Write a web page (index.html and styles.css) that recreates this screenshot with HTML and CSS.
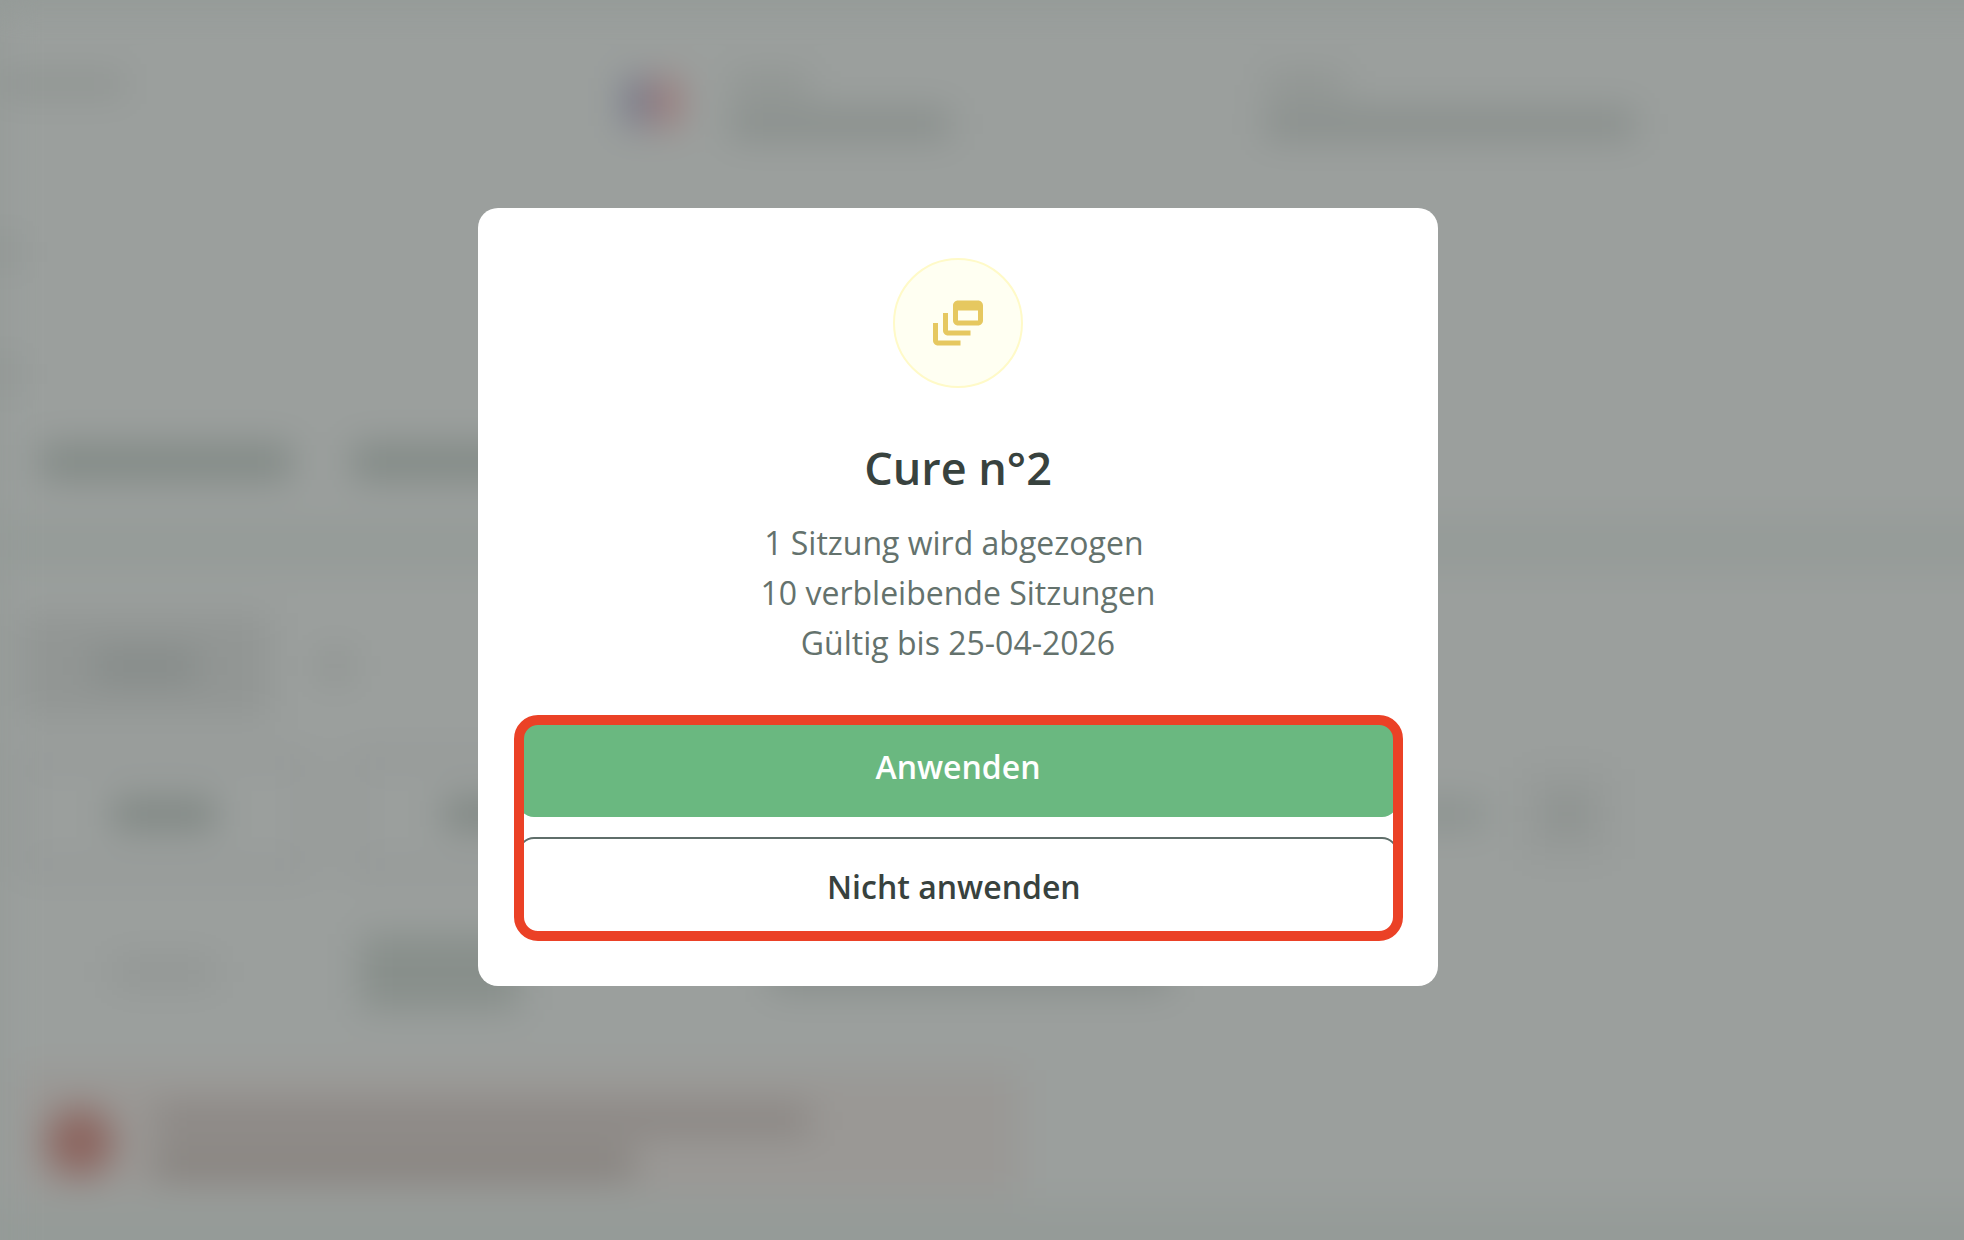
FILE: index.html
```
<!DOCTYPE html>
<html lang="de">
<head>
    <meta charset="UTF-8">
    <meta name="viewport" content="width=device-width, initial-scale=1.0">
    <title>Cure n°2</title>
    <link rel="stylesheet" href="styles.css">
</head>
<body>
    <!-- Blurred page behind the dialog -->
    <div class="page" aria-hidden="true">
        <section class="panel customer">
            <div class="info-grid">
                <div class="info">
                    <span class="bar label long"></span>
                </div>
                <div class="info with-flag">
                    <span class="flag"></span>
                    <div class="lines">
                        <span class="bar label"></span>
                        <span class="bar value"></span>
                    </div>
                </div>
                <div class="info with-icon">
                    <div class="lines">
                        <span class="bar label"></span>
                        <span class="bar value wide"></span>
                    </div>
                </div>
            </div>
            <div class="notes">
                <span class="bar stub"></span>
                <span class="bar stub"></span>
            </div>
            <div class="tabs">
                <span class="bar tab"></span>
                <span class="bar tab"></span>
            </div>
        </section>

        <section class="panel booking">
            <div class="filters">
                <span class="pill"><span class="bar word"></span></span>
                <span class="bar dot"></span>
            </div>
            <div class="options">
                <span class="option"><span class="bar word dark"></span></span>
                <span class="option"><span class="bar word dark"></span></span>
                <span class="option last"><span class="bar word"></span></span>
                <span class="round"><span class="bar dot"></span></span>
            </div>
            <div class="actions">
                <span class="bar word faint"></span>
                <span class="pill small"></span>
                <span class="bar link"></span>
            </div>
            <div class="alert">
                <span class="alert-icon"></span>
                <div class="lines">
                    <span class="bar line"></span>
                    <span class="bar line short"></span>
                </div>
            </div>
        </section>
    </div>

    <div class="overlay">
        <div class="modal" role="dialog" aria-modal="true" aria-labelledby="modalTitle">
            <div class="modal-icon">
                <svg viewBox="0 0 24 24" aria-hidden="true">
                    <path d="M8 8H6v7c0 1.1.9 2 2 2h9v-2H8V8z"/>
                    <path d="M20 3h-8c-1.1 0-2 .9-2 2v6c0 1.1.9 2 2 2h8c1.1 0 2-.9 2-2V5c0-1.1-.9-2-2-2zm0 8h-8V7h8v4z"/>
                    <path d="M4 12H2v7c0 1.1.9 2 2 2h9v-2H4v-7z"/>
                </svg>
            </div>
            <h1 id="modalTitle">Cure n°2</h1>
            <p>1 Sitzung wird abgezogen&nbsp;<br>10 verbleibende Sitzungen<br>Gültig bis 25-04-2026</p>
            <div class="modal-actions">
                <button type="button" class="btn primary">Anwenden</button>
                <button type="button" class="btn secondary">Nicht anwenden&nbsp;</button>
            </div>
        </div>
    </div>
</body>
</html>
```
FILE: styles.css
```
:root {
    --page-bg: #959b98;
    --panel-bg: #9b9f9d;
    --ink: 56, 72, 66;
    --title-color: #38423e;
    --text-color: #64726d;
    --primary: #6ab880;
    --highlight: #eb4126;
}
* {
    box-sizing: border-box;
}
body {
    margin: 0;
    min-height: 100vh;
    overflow: hidden;
    background-color: var(--page-bg);
    font-family: "Open Sans", "Noto Sans", sans-serif;
}

/* Page behind */
.page {
    position: fixed;
    inset: 0 -60px -60px 0;
    background-color: var(--page-bg);
    filter: blur(18px);
}
.panel {
    background-color: var(--panel-bg);
    padding-right: 60px;
}
.customer {
    height: 520px;
    padding-top: 64px;
    border-top: 14px solid var(--page-bg);
}
.booking {
    margin-top: 50px;
    padding-top: 44px;
    padding-bottom: 8px;
}
.bar {
    display: block;
    height: 28px;
    background-color: rgba(var(--ink), 0.2);
}
.info-grid {
    display: grid;
    grid-template-columns: 626px 531px 1fr;
    height: 160px;
}
.info {
    display: flex;
    align-items: flex-start;
    gap: 52px;
}
.with-icon {
    padding-left: 108px;
}
.lines {
    display: flex;
    flex-direction: column;
    gap: 16px;
}
.bar.label {
    width: 80px;
    height: 20px;
    margin-top: -4px;
    background-color: rgba(var(--ink), 0.14);
}
.bar.label.long {
    width: 125px;
}
.bar.value {
    width: 220px;
}
.bar.value.wide {
    width: 370px;
}
.flag {
    width: 52px;
    height: 48px;
    background: linear-gradient(90deg, #6c6e84 0 40%, #a09a9a 40% 60%, #9c7070 60%);
}
.notes {
    display: flex;
    flex-direction: column;
    gap: 94px;
    height: 206px;
}
.bar.stub {
    width: 14px;
}
.tabs {
    display: flex;
    gap: 60px;
    padding-left: 40px;
}
.bar.tab {
    width: 252px;
    height: 36px;
    background-color: rgba(var(--ink), 0.26);
}
.filters {
    display: flex;
    align-items: center;
    gap: 50px;
    padding-left: 20px;
}
.pill {
    display: flex;
    align-items: center;
    justify-content: center;
    width: 250px;
    height: 104px;
    background-color: rgba(var(--ink), 0.09);
}
.bar.word {
    width: 104px;
    background-color: rgba(var(--ink), 0.15);
}
.bar.word.dark {
    background-color: rgba(var(--ink), 0.32);
}
.bar.word.faint {
    background-color: rgba(var(--ink), 0.09);
}
.bar.dot {
    width: 30px;
    background-color: rgba(var(--ink), 0.14);
}
.options {
    display: flex;
    align-items: center;
    gap: 36px;
    margin-top: 36px;
    padding-left: 16px;
}
.option {
    display: flex;
    align-items: center;
    justify-content: center;
    width: 296px;
    height: 120px;
    border: 10px solid rgba(var(--ink), 0.1);
}
.option.last {
    justify-content: flex-end;
    width: 806px;
    border: 0;
}
.round {
    display: flex;
    align-items: center;
    justify-content: center;
    width: 90px;
    height: 90px;
    background-color: rgba(var(--ink), 0.05);
}
.actions {
    display: flex;
    align-items: center;
    margin-top: 60px;
    padding-left: 112px;
}
.pill.small {
    width: 160px;
    height: 76px;
    margin-left: 144px;
    background-color: rgba(var(--ink), 0.19);
}
.bar.link {
    width: 400px;
    height: 36px;
    margin-left: 250px;
}
.alert {
    display: flex;
    align-items: center;
    gap: 40px;
    width: 1000px;
    height: 124px;
    margin-top: 60px;
    margin-left: 20px;
    padding-top: 20px;
    padding-left: 26px;
    background-color: #9a9895;
}
.alert-icon {
    width: 68px;
    height: 68px;
    border-radius: 50%;
    background-color: #8c645e;
}
.bar.line {
    width: 656px;
    background-color: rgba(90, 78, 74, 0.26);
}
.bar.line.short {
    width: 480px;
    background-color: rgba(90, 78, 74, 0.34);
}

/* Dialog */
.overlay {
    position: fixed;
    inset: 0;
    display: flex;
    align-items: center;
    justify-content: center;
    padding: 0 48px 46px 0;
}
.modal {
    display: flex;
    flex-direction: column;
    align-items: center;
    width: 100%;
    max-width: 960px;
    padding: 50px 40px 49px;
    border-radius: 20px;
    background-color: #fff;
    text-align: center;
}
.modal-icon {
    display: flex;
    align-items: center;
    justify-content: center;
    width: 130px;
    height: 130px;
    border: 2px solid #fffac8;
    border-radius: 50%;
    background-color: #fffff2;
}
.modal-icon svg {
    width: 60px;
    height: 60px;
    fill: #e6c860;
}
.modal h1 {
    margin: 50px 0 20px;
    color: var(--title-color);
    font-size: 45px;
    font-weight: 600;
    line-height: 60px;
}
.modal p {
    margin: 0;
    color: var(--text-color);
    font-size: 32px;
    line-height: 50px;
}
.modal-actions {
    position: relative;
    display: flex;
    flex-direction: column;
    gap: 20px;
    width: 100%;
    margin-top: 49px;
}
/* red marker around both buttons */
.modal-actions::after {
    content: "";
    position: absolute;
    inset: -2px -5px -4px -4px;
    border: 10px solid var(--highlight);
    border-radius: 24px;
    pointer-events: none;
}
.btn {
    height: 100px;
    border: 2px solid var(--primary);
    border-radius: 16px;
    font-family: inherit;
    font-size: 32px;
    font-weight: 600;
    line-height: 50px;
    cursor: pointer;
}
.btn.primary {
    background-color: var(--primary);
    color: #fff;
}
.btn.secondary {
    border-color: #5f6e6a;
    background-color: #fff;
    color: var(--title-color);
}
```
